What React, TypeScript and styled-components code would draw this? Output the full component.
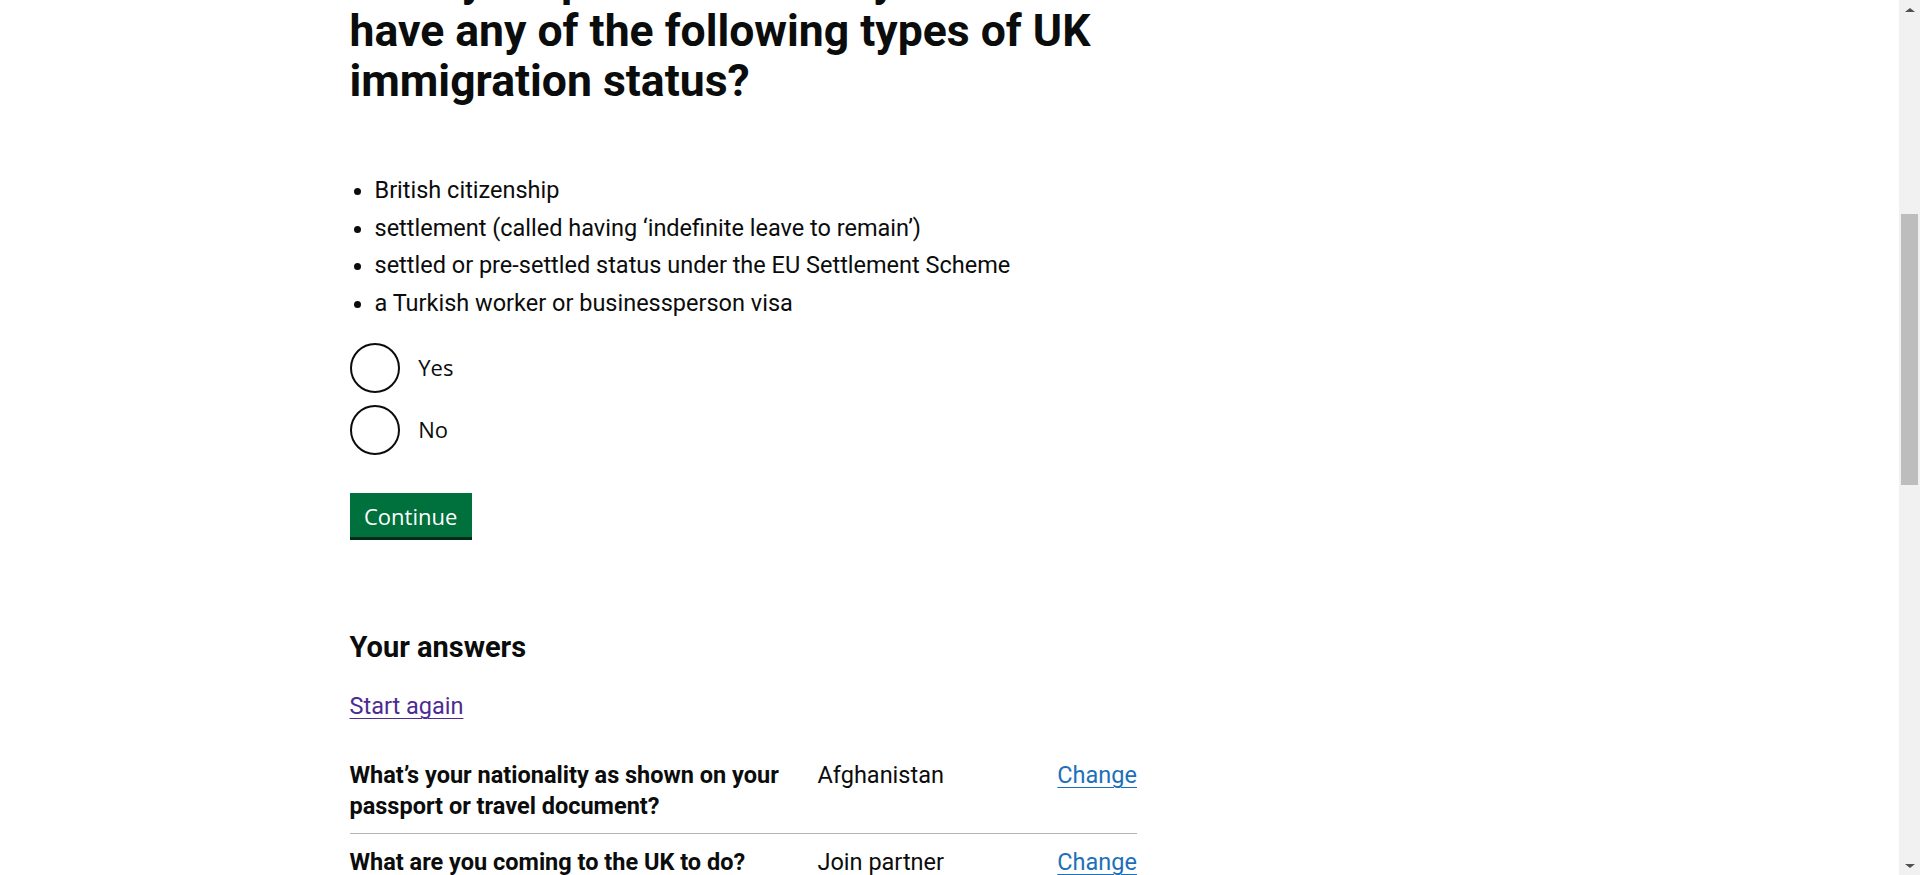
import React, { useLayoutEffect, useRef, useState } from "react";
import styled, { createGlobalStyle } from "styled-components";

const GlobalStyle = createGlobalStyle`
  html, body { margin: 0; padding: 0; background: #ffffff; }
  body {
    padding-right: 21px;
    font-family: Roboto, "Liberation Sans", Arial, sans-serif;
    color: #0b0c0c;
  }
`;

/* ---------- window scrollbar (drawn, the page hides the native one) ---------- */

const ScrollTrack = styled.div`
  position: fixed;
  top: 0;
  right: 0;
  width: 21px;
  height: 100vh;
  background: #f1f1f1;
  z-index: 10;
`;

const ScrollArrow = styled.div<{ $down?: boolean }>`
  position: absolute;
  left: 0;
  ${(p) => (p.$down ? "bottom: 0;" : "top: 0;")}
  width: 21px;
  height: 21px;
  display: flex;
  align-items: center;
  justify-content: center;

  &::before {
    content: "";
    width: 0;
    height: 0;
    border-left: 5px solid transparent;
    border-right: 5px solid transparent;
    ${(p) =>
      p.$down
        ? "border-top: 4px solid #505050; margin-top: 2px;"
        : "border-bottom: 4px solid #505050; margin-bottom: 2px;"}
  }
`;

const ScrollThumb = styled.div`
  position: absolute;
  left: 2px;
  width: 17px;
  background: #bdbdbd;
`;

/* ---------- page frame ---------- */

const Width = styled.div`
  max-width: 1200px;
  margin: 0 auto;
`;

const CookieBanner = styled.div`
  background: #f3f2f1;
  padding: 25px 0 12.5px;
`;

const CookieHeading = styled.h2`
  margin: 0 0 18.75px;
  font-size: 30px;
  line-height: 37.5px;
  font-weight: 700;
`;

const CookieText = styled.p`
  margin: 0 0 18.75px;
  font-size: 23.5px;
  line-height: 31.25px;
  max-width: 787.5px;
`;

const CookieActions = styled.div`
  display: flex;
  align-items: center;
  gap: 18.75px;
  margin-bottom: 25px;
`;

const Header = styled.header`
  background: #0b0c0c;
  border-bottom: 12.5px solid #1d70b8;
`;

const HeaderInner = styled(Width)`
  display: flex;
  align-items: center;
  justify-content: space-between;
  padding: 12.5px 0;
`;

const Logo = styled.a`
  display: flex;
  align-items: center;
  gap: 8px;
  color: #ffffff;
  text-decoration: none;
  font-weight: 700;
  font-size: 37.5px;
  line-height: 37.5px;
`;

const HeaderMenu = styled.span`
  color: #ffffff;
  font-size: 23.5px;
  font-weight: 700;
`;

const Main = styled.main`
  padding: 50px 0 100px;
`;

const BackLink = styled.a`
  display: inline-block;
  margin: 0 0 91.5px;
  font-size: 20px;
  line-height: 25px;
  color: #0b0c0c;
  text-decoration: underline;
`;

const Caption = styled.span`
  display: block;
  margin-bottom: 6.25px;
  color: #505a5f;
  font-size: 30px;
  line-height: 37.5px;
`;

const GridRow = styled.div`
  display: flex;
  margin: 0 -18.75px;
`;

const TwoThirds = styled.div`
  box-sizing: border-box;
  width: 66.6667%;
  padding: 0 18.75px;
`;

const OneThird = styled.div`
  box-sizing: border-box;
  width: 33.3333%;
  padding: 0 18.75px;
`;

/* ---------- question ---------- */

const Fieldset = styled.fieldset`
  margin: 0 0 38px;
  padding: 0;
  border: 0;
  min-width: 0;
`;

const Legend = styled.legend`
  padding: 0;
  margin: 0;
  width: 100%;
`;

const Heading = styled.h1`
  margin: 0 0 69.5px;
  font-size: 44.5px;
  line-height: 50px;
  font-weight: 700;
`;

const BulletList = styled.ul`
  margin: 0 0 23.5px;
  padding-left: 25px;
  list-style-type: disc;
  font-size: 23.5px;
  line-height: 31.25px;
`;

const Bullet = styled.li`
  margin-bottom: 6.25px;
`;

const Radios = styled.div`
  display: flex;
  flex-direction: column;
  gap: 12.5px;
`;

const RadioItem = styled.label`
  display: flex;
  align-items: center;
  min-height: 50px;
  cursor: pointer;
`;

const RadioInput = styled.input`
  appearance: none;
  flex: none;
  box-sizing: border-box;
  width: 50px;
  height: 50px;
  margin: 0;
  border: 2.5px solid #0b0c0c;
  border-radius: 50%;
  background: #ffffff;
`;

const RadioLabel = styled.span`
  padding: 0 18.75px;
  font-family: "Open Sans", "Liberation Sans", Arial, sans-serif;
  font-size: 22px;
  line-height: 31.25px;
`;

const Button = styled.button<{ $flush?: boolean }>`
  display: inline-block;
  margin: 0 0 ${(p) => (p.$flush ? "0" : "91.5px")};
  padding: 10px 12.5px 8px;
  border: 2.5px solid transparent;
  border-radius: 0;
  background: #00703c;
  box-shadow: 0 3px 0 #002d18;
  color: #ffffff;
  font-family: "Open Sans", "Liberation Sans", Arial, sans-serif;
  font-size: 22px;
  line-height: 22px;
  cursor: pointer;
`;

/* ---------- answers ---------- */

const SubHeading = styled.h2`
  margin: 0 0 25px;
  font-size: 29px;
  line-height: 37.5px;
  font-weight: 700;
`;

const Body = styled.p`
  margin: 0 0 25px;
  font-size: 23.5px;
  line-height: 31.25px;
`;

const Link = styled.a<{ $visited?: boolean }>`
  color: ${(p) => (p.$visited ? "#4c2c92" : "#1d70b8")};
  text-decoration: underline;
  text-decoration-thickness: 1.25px;
  text-underline-offset: 0.16em;
`;

const SummaryList = styled.dl`
  margin: 0;
  font-size: 23.5px;
  line-height: 31.25px;
`;

const SummaryRow = styled.div<{ $last?: boolean }>`
  display: grid;
  grid-template-columns: 468px 1fr auto;
  border-bottom: 1px solid ${(p) => (p.$last ? "transparent" : "#b1b4b6")};
`;

const SummaryKey = styled.dt`
  margin: 0;
  padding: 12.5px 25px 11px 0;
  font-weight: 700;
`;

const SummaryValue = styled.dd`
  margin: 0;
  padding: 12.5px 25px 11px 0;
`;

const SummaryAction = styled.dd`
  margin: 0;
  padding: 12.5px 0 11px;
  text-align: right;
`;

/* ---------- feedback + footer ---------- */

const Feedback = styled.div`
  display: flex;
  align-items: center;
  justify-content: space-between;
  margin: 100px 0 0;
  padding: 37.5px 25px;
  background: #f3f2f1;
  border-top: 2.5px solid #1d70b8;
  font-size: 23.5px;
  font-weight: 700;
`;

const Footer = styled.footer`
  background: #f3f2f1;
  border-top: 1.25px solid #b1b4b6;
  padding: 62.5px 0 50px;
  font-size: 20px;
  line-height: 25px;
`;

const FooterNav = styled.div`
  display: grid;
  grid-template-columns: 2fr 1fr;
  gap: 37.5px;
  margin-bottom: 75px;
`;

const FooterTitle = styled.h2`
  margin: 0 0 31.25px;
  padding-bottom: 25px;
  border-bottom: 1.25px solid #b1b4b6;
  font-size: 30px;
  line-height: 37.5px;
  font-weight: 700;
`;

const FooterList = styled.ul<{ $cols: number }>`
  margin: 0;
  padding: 0;
  list-style: none;
  column-count: ${(p) => p.$cols};
  column-gap: 37.5px;
`;

const FooterItem = styled.li`
  margin-bottom: 25px;
  break-inside: avoid;
`;

const FooterLink = styled.a`
  color: #0b0c0c;
  text-decoration: underline;
`;

const FooterMeta = styled.div`
  display: flex;
  justify-content: space-between;
  align-items: flex-end;
  gap: 37.5px;
  padding-top: 37.5px;
  border-top: 1.25px solid #b1b4b6;
`;

const MetaLinks = styled.ul`
  display: flex;
  flex-wrap: wrap;
  gap: 12.5px 18.75px;
  margin: 0 0 31.25px;
  padding: 0;
  list-style: none;
`;

const OglMark = styled.svg`
  display: block;
  margin-bottom: 12.5px;
`;

const Licence = styled.p`
  margin: 0;
`;

const Copyright = styled.a`
  color: #0b0c0c;
  white-space: nowrap;
`;

const services = [
  "Benefits",
  "Births, death, marriages and care",
  "Business and self-employed",
  "Childcare and parenting",
  "Citizenship and living in the UK",
  "Crime, justice and the law",
  "Disabled people",
  "Driving and transport",
  "Education and learning",
  "Employing people",
  "Environment and countryside",
  "Housing and local services",
  "Money and tax",
  "Passports, travel and living abroad",
  "Visas and immigration",
  "Working, jobs and pensions",
];

const activity = [
  "Departments",
  "News",
  "Guidance and regulation",
  "Research and statistics",
  "Policy papers and consultations",
  "Transparency",
  "How government works",
  "Get involved",
];

const metaLinks = [
  "Help",
  "Privacy",
  "Cookies",
  "Accessibility statement",
  "Contact",
  "Terms and conditions",
  "Rhestr o Wasanaethau Cymraeg",
  "Government Digital Service",
];

const statuses = [
  "British citizenship",
  "settlement (called having \u2018indefinite leave to remain\u2019)",
  "settled or pre-settled status under the EU Settlement Scheme",
  "a Turkish worker or businessperson visa",
];

const answers = [
  {
    q: "What\u2019s your nationality as shown on your passport or travel document?",
    a: "Afghanistan",
  },
  { q: "What are you coming to the UK to do?", a: "Join partner" },
];

const ARROW = 21;

export default function App() {
  const headingRef = useRef<HTMLHeadingElement>(null);
  const [thumb, setThumb] = useState({ top: ARROW, len: 0 });

  useLayoutEffect(() => {
    if ("scrollRestoration" in history) history.scrollRestoration = "manual";
    const measure = () => {
      const doc = document.documentElement;
      const view = window.innerHeight;
      const total = doc.scrollHeight;
      const track = view - ARROW * 2;
      const len = total > view ? Math.max(20, (track * view) / total) : 0;
      const range = total - view;
      const top = ARROW + (range > 0 ? (window.scrollY / range) * (track - len) : 0);
      setThumb({ top, len });
    };
    const place = () => {
      const el = headingRef.current;
      if (!el) return;
      const top = el.getBoundingClientRect().top + window.scrollY;
      window.scrollTo(0, top + 44);
      measure();
    };
    place();
    if (document.fonts) document.fonts.ready.then(place);
    window.addEventListener("load", place);
    window.addEventListener("scroll", measure);
    window.addEventListener("resize", measure);
    const t = window.setTimeout(place, 200);
    return () => {
      window.removeEventListener("load", place);
      window.removeEventListener("scroll", measure);
      window.removeEventListener("resize", measure);
      window.clearTimeout(t);
    };
  }, []);

  return (
    <>
      <GlobalStyle />
      <CookieBanner>
        <Width>
          <CookieHeading>Cookies on GOV.UK</CookieHeading>
          <CookieText>We use some essential cookies to make this website work.</CookieText>
          <CookieText>
            We&rsquo;d like to set additional cookies to understand how you use GOV.UK,
            remember your settings and improve government services.
          </CookieText>
          <CookieActions>
            <Button type="button" $flush>
              Accept additional cookies
            </Button>
            <Button type="button" $flush>
              Reject additional cookies
            </Button>
            <Link href="#">View cookies</Link>
          </CookieActions>
        </Width>
      </CookieBanner>

      <Header>
        <HeaderInner>
          <Logo href="#">
            <svg width="36" height="32" viewBox="0 0 36 32" aria-hidden="true">
              <path
                fill="#ffffff"
                d="M18 2l3 4-3 2-3-2 3-4zm-9 6l3 3-2 3-3-2 2-4zm18 0l2 4-3 2-2-3 3-3zM6 16h24l-3 12H9L6 16z"
              />
            </svg>
            GOV.UK
          </Logo>
          <HeaderMenu>Menu</HeaderMenu>
        </HeaderInner>
      </Header>

      <Width>
        <Main>
          <BackLink href="#">Back</BackLink>
          <GridRow>
            <TwoThirds>
              <Caption>Check if you need a UK visa</Caption>
              <form onSubmit={(e) => e.preventDefault()}>
                <Fieldset>
                  <Legend>
                    <Heading ref={headingRef}>
                      Does your partner or family member have any of the following types
                      of UK immigration status?
                    </Heading>
                  </Legend>
                  <BulletList>
                    {statuses.map((s) => (
                      <Bullet key={s}>{s}</Bullet>
                    ))}
                  </BulletList>
                  <Radios>
                    <RadioItem>
                      <RadioInput type="radio" name="status" value="yes" />
                      <RadioLabel>Yes</RadioLabel>
                    </RadioItem>
                    <RadioItem>
                      <RadioInput type="radio" name="status" value="no" />
                      <RadioLabel>No</RadioLabel>
                    </RadioItem>
                  </Radios>
                </Fieldset>
                <Button type="submit">Continue</Button>
              </form>

              <SubHeading>Your answers</SubHeading>
              <Body>
                <Link href="#" $visited>
                  Start again
                </Link>
              </Body>
              <SummaryList>
                {answers.map((row, i) => (
                  <SummaryRow key={row.q} $last={i === answers.length - 1}>
                    <SummaryKey>{row.q}</SummaryKey>
                    <SummaryValue>{row.a}</SummaryValue>
                    <SummaryAction>
                      <Link href="#">Change</Link>
                    </SummaryAction>
                  </SummaryRow>
                ))}
              </SummaryList>
            </TwoThirds>
            <OneThird />
          </GridRow>
          <Feedback>
            <span>Is this page useful?</span>
            <Link href="#">Report a problem with this page</Link>
          </Feedback>
        </Main>
      </Width>

      <Footer>
        <Width>
          <FooterNav>
            <div>
              <FooterTitle>Services and information</FooterTitle>
              <FooterList $cols={2}>
                {services.map((s) => (
                  <FooterItem key={s}>
                    <FooterLink href="#">{s}</FooterLink>
                  </FooterItem>
                ))}
              </FooterList>
            </div>
            <div>
              <FooterTitle>Government activity</FooterTitle>
              <FooterList $cols={1}>
                {activity.map((s) => (
                  <FooterItem key={s}>
                    <FooterLink href="#">{s}</FooterLink>
                  </FooterItem>
                ))}
              </FooterList>
            </div>
          </FooterNav>
          <FooterMeta>
            <div>
              <MetaLinks>
                {metaLinks.map((s) => (
                  <li key={s}>
                    <FooterLink href="#">{s}</FooterLink>
                  </li>
                ))}
              </MetaLinks>
              <OglMark width="51" height="21" viewBox="0 0 41 17" aria-hidden="true">
                <path
                  fill="#0b0c0c"
                  d="M8.5 1a7.5 7.5 0 100 15 7.5 7.5 0 000-15zm0 4a3.5 3.5 0 110 7 3.5 3.5 0 010-7zM20 1a7.5 7.5 0 100 15h3V9h-4v3h0a3.5 3.5 0 110-7h4V1zM27 1h4v11h8v4H27z"
                />
              </OglMark>
              <Licence>
                All content is available under the Open Government Licence v3.0, except
                where otherwise stated
              </Licence>
            </div>
            <Copyright href="#">&copy; Crown copyright</Copyright>
          </FooterMeta>
        </Width>
      </Footer>

      <ScrollTrack aria-hidden="true">
        <ScrollArrow />
        <ScrollThumb style={{ top: thumb.top, height: thumb.len }} />
        <ScrollArrow $down />
      </ScrollTrack>
    </>
  );
}
